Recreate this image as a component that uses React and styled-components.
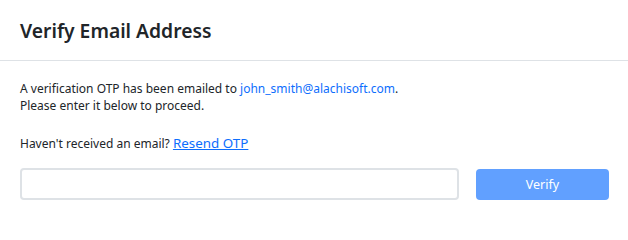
import styled, { createGlobalStyle } from "styled-components";

const GlobalStyle = createGlobalStyle`
  html, body {
    margin: 0;
    padding: 0;
    background: #ffffff;
  }
  body {
    font-family: "Segoe UI", "Noto Sans", "Liberation Sans", sans-serif;
    color: #212529;
  }
  * {
    box-sizing: border-box;
  }
`;

const StyledModal = styled.div`
  width: 628px;
  height: 222px;
  background: #ffffff;
`;

const StyledHeader = styled.div`
  height: 61px;
  display: flex;
  align-items: center;
  padding: 0 20px;
  border-bottom: 1px solid #dee2e6;
`;

const StyledTitle = styled.h5`
  margin: 2px 0 0;
  font-size: 19.3px;
  font-weight: 600;
  line-height: 24px;
  color: #212529;
`;

const StyledBody = styled.div`
  padding: 19px 19px 0 20px;
`;

const StyledText = styled.p`
  margin: 0 0 ${(props) => props.$gap || 0}px;
  font-size: 12px;
  line-height: 17px;
  color: #212529;
`;

const StyledEmail = styled.span`
  color: #0d6efd;
`;

const StyledLink = styled.a`
  font-size: 13.4px;
  color: #0d6efd;
  text-decoration: underline;
  cursor: pointer;
`;

const StyledForm = styled.div`
  display: flex;
  align-items: flex-start;
  gap: 17px;
  margin-top: 16px;
`;

const StyledInput = styled.input`
  flex: 1;
  height: 32px;
  border: 2px solid #dee2e6;
  border-radius: 4px;
  padding: 0 10px;
  font-family: inherit;
  font-size: 13px;
  outline: none;
`;

const StyledButton = styled.button`
  width: 133px;
  height: 31px;
  margin-top: 1px;
  border: none;
  border-radius: 4px;
  background: #61a0ff;
  color: #ffffff;
  font-family: inherit;
  font-size: 12.5px;
  cursor: default;
`;

const App = () => {
  return (
    <StyledModal>
      <GlobalStyle />
      <StyledHeader>
        <StyledTitle>Verify Email Address</StyledTitle>
      </StyledHeader>
      <StyledBody>
        <StyledText $gap={21}>
          A verification OTP has been emailed to{" "}
          <StyledEmail>john_smith@alachisoft.com</StyledEmail>.
          <br />
          Please enter it below to proceed.
        </StyledText>
        <StyledText>
          Haven't received an email? <StyledLink>Resend OTP</StyledLink>
        </StyledText>
        <StyledForm>
          <StyledInput type="text" />
          <StyledButton disabled>Verify</StyledButton>
        </StyledForm>
      </StyledBody>
    </StyledModal>
  );
};

export default App;
